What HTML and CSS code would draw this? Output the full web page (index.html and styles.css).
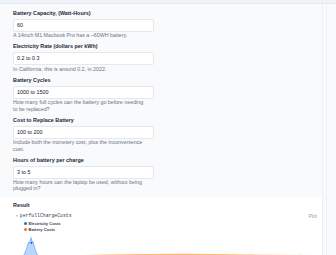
FILE: index.html
```html
<!DOCTYPE html>
<html>
<head>
    <title>Battery Costs</title>
    <link rel="stylesheet" href="styles.css">
</head>
<body>
    <div class="topbar"></div>
    <div class="page">
        <div class="main">
            <div class="form">
                <div class="field">
                    <label class="label">Battery Capacity, (Watt-Hours)</label>
                    <div class="input">60</div>
                    <div class="help">A 14inch M1 Macbook Pro has a ~60WH battery.</div>
                </div>
                <div class="field">
                    <label class="label">Electricity Rate (dollars per kWh)</label>
                    <div class="input">0.2 to 0.3</div>
                    <div class="help">In California, this is around 0.2, in 2022.</div>
                </div>
                <div class="field">
                    <label class="label">Battery Cycles</label>
                    <div class="input">1000 to 1500</div>
                    <div class="help">How many full cycles can the battery go before needing<br>to be replaced?</div>
                </div>
                <div class="field">
                    <label class="label">Cost to Replace Battery</label>
                    <div class="input">100 to 200</div>
                    <div class="help">Include both the monetery cost, plus the inconvenience<br>cost.</div>
                </div>
                <div class="field">
                    <label class="label">Hours of battery per charge</label>
                    <div class="input">3 to 5</div>
                    <div class="help">How many hours can the laptop be used, without being<br>plugged in?</div>
                </div>
            </div>

            <div class="result">
                <div class="result-title">Result</div>
                <div class="result-head">
                    <div class="var-name"><span class="caret">&#9662;</span>perfullChargeCosts</div>
                    <div class="plot-link">Plot</div>
                </div>
                <div class="legend">
                    <div class="legend-item"><span class="dot blue"></span>Electricity Costs</div>
                    <div class="legend-item"><span class="dot orange"></span>Battery Costs</div>
                </div>
                <svg class="chart" width="322" height="28" viewBox="0 0 322 28">
                    <path d="M57,23 C100,22.4 140,21 190,21.4 C240,21.8 272,22.5 316,22.5 L316,23 Z" fill="rgba(253,186,116,0.35)"/>
                    <path d="M57,23 C100,22.4 140,21 190,21.4 C240,21.8 272,22.5 316,22.5" fill="none" stroke="#fdba74" stroke-width="1.1"/>
                    <line x1="204" y1="20" x2="204" y2="26" stroke="#d1d5db" stroke-width="0.5"/>
                    <line x1="251" y1="20" x2="251" y2="26" stroke="#d1d5db" stroke-width="0.5"/>
                    <line x1="300" y1="20" x2="300" y2="26" stroke="#d1d5db" stroke-width="0.5"/>
                    <path d="M20,26 C23,25 25,20 27,14 L28.5,9 L29.5,10 L31,4.5 L32,9 L33,8.5 C35,16 37,24 42,26 Z" fill="rgba(96,165,250,0.45)" stroke="#3b82f6" stroke-width="0.5"/>
                    <circle cx="31.5" cy="10" r="0.9" fill="#1d4ed8"/>
                </svg>
            </div>
        </div>
        <div class="rail"></div>
    </div>
</body>
</html>
```

FILE: styles.css
```css
body {
    margin: 0;
    font-family: "Liberation Sans", Arial, sans-serif;
    background: #f8fafc;
    color: #1f2937;
    overflow: hidden;
}

.topbar {
    height: 3px;
    background: #eef2f7;
    border-bottom: 1px solid #e5e9ef;
}

.page {
    display: flex;
}

.main {
    width: 322px;
    border-right: 1px solid #eceff3;
}

.rail {
    flex: 1;
    border-right: 1px solid #f0f2f5;
    margin-right: 9px;
}

.form {
    padding: 5.5px 13px 6.5px 13px;
    display: flex;
    flex-direction: column;
    gap: 5px;
}

.field {
    display: flex;
    flex-direction: column;
}

.label {
    font-size: 5.4px;
    line-height: 7px;
    font-weight: 600;
    color: #1f2937;
    margin-bottom: 2px;
}

.input {
    width: 133px;
    height: 11px;
    padding: 0 3px;
    background: white;
    border: 0.5px solid #e5e7eb;
    border-radius: 2px;
    font-size: 5.4px;
    line-height: 11px;
    color: #111827;
}

.help {
    font-size: 5.3px;
    line-height: 6.2px;
    color: #6b7280;
    margin-top: 0.5px;
}

.result {
    background: white;
    padding: 3.5px 13px 0 13px;
    height: 80px;
}

.result-title {
    font-size: 5.4px;
    line-height: 7px;
    font-weight: 600;
    color: #1f2937;
}

.result-head {
    display: flex;
    justify-content: space-between;
    align-items: center;
    margin-top: 3px;
    margin-right: -8px;
}

.var-name {
    font-family: "Liberation Mono", "Courier New", monospace;
    font-size: 4.8px;
    line-height: 7px;
    color: #374151;
}

.caret {
    font-family: "DejaVu Sans", sans-serif;
    font-size: 3.5px;
    color: #9ca3af;
    margin: 0 2px 0 3px;
}

.plot-link {
    font-size: 5px;
    color: #9ca3af;
}

.legend {
    padding-left: 11px;
    margin-top: 1px;
}

.legend-item {
    display: flex;
    align-items: center;
    font-size: 4.1px;
    line-height: 6px;
    font-weight: 600;
    color: #374151;
}

.dot {
    width: 3px;
    height: 3px;
    border-radius: 50%;
    margin-right: 1.5px;
}

.dot.blue {
    background: #1d6fd6;
}

.dot.orange {
    background: #f97316;
}

.chart {
    display: block;
    margin-left: -13px;
}
```
